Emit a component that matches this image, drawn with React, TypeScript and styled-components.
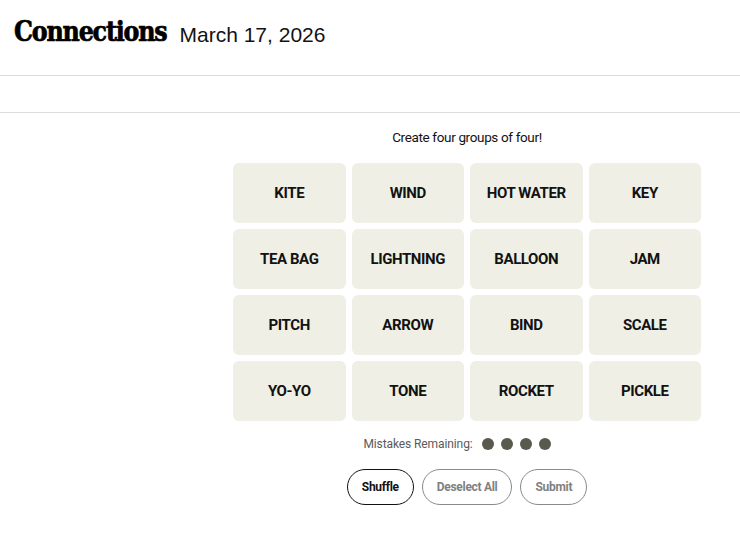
import styled, { createGlobalStyle } from 'styled-components';

const Global = createGlobalStyle`
  html, body {
    margin: 0;
    padding: 0;
    background: #ffffff;
    font-family: 'Roboto', 'Liberation Sans', sans-serif;
    color: #000;
  }
`;

const Header = styled.header`
  height: 76px;
  border-bottom: 1px solid #dcdcdc;
  display: flex;
  align-items: flex-start;
  padding: 15px 14px 0;
  gap: 6px;
  box-sizing: border-box;
`;

const Title = styled.h1`
  margin: 0 -20px 0 0;
  font-family: 'DejaVu Serif', 'Liberation Serif', serif;
  font-weight: 700;
  font-size: 28px;
  line-height: 34px;
  letter-spacing: -1.4px;
  -webkit-text-stroke: 0.7px #000;
  transform: scaleX(0.85);
  transform-origin: left center;
`;

const DateText = styled.span`
  font-family: 'Liberation Sans', sans-serif;
  font-size: 21px;
  line-height: 34px;
  font-weight: 400;
  color: #121212;
  margin-top: 3px;
`;

const Toolbar = styled.div`
  height: 36px;
  border-bottom: 1px solid #dcdcdc;
`;

const Board = styled.main`
  width: 468px;
  margin-left: 233px;
  display: flex;
  flex-direction: column;
  align-items: center;
`;

const Prompt = styled.p`
  margin: 16px 0 18px;
  font-size: 13.5px;
  color: #121212;
  letter-spacing: -0.35px;
`;

const Grid = styled.div`
  width: 100%;
  display: grid;
  grid-template-columns: repeat(4, 1fr);
  gap: 6px 6px;
`;

const Tile = styled.button`
  height: 60px;
  border: none;
  border-radius: 6px;
  background: #efefe6;
  font-family: 'Roboto', sans-serif;
  font-weight: 700;
  font-size: 15px;
  letter-spacing: -0.4px;
  color: #121212;
  text-transform: uppercase;
`;

const Mistakes = styled.div`
  display: flex;
  align-items: center;
  margin: 16px 0 0 -20px;
  font-size: 12px;
  color: #5a5a5a;
  letter-spacing: -0.1px;
`;

const Dots = styled.div`
  display: flex;
  gap: 7px;
  margin-left: 9px;
`;

const Dot = styled.span`
  width: 12px;
  height: 12px;
  border-radius: 50%;
  background: #5a594e;
`;

const Actions = styled.div`
  display: flex;
  gap: 8px;
  margin-top: 18px;
`;

const Pill = styled.button<{ $active?: boolean }>`
  height: 36px;
  padding: 0 14px;
  border-radius: 18px;
  background: #fff;
  border: 1px solid ${(p) => (p.$active ? '#121212' : '#8a8a8a')};
  color: ${(p) => (p.$active ? '#121212' : '#7f7f7f')};
  font-family: 'Roboto', sans-serif;
  font-weight: 700;
  font-size: 12px;
  letter-spacing: -0.3px;
`;

const words = [
  'KITE', 'WIND', 'HOT WATER', 'KEY',
  'TEA BAG', 'LIGHTNING', 'BALLOON', 'JAM',
  'PITCH', 'ARROW', 'BIND', 'SCALE',
  'YO-YO', 'TONE', 'ROCKET', 'PICKLE',
];

export default function App() {
  return (
    <>
      <Global />
      <Header>
        <Title>Connections</Title>
        <DateText>March 17, 2026</DateText>
      </Header>
      <Toolbar />
      <Board>
        <Prompt>Create four groups of four!</Prompt>
        <Grid>
          {words.map((w) => (
            <Tile key={w}>{w}</Tile>
          ))}
        </Grid>
        <Mistakes>
          Mistakes Remaining:
          <Dots>
            {[0, 1, 2, 3].map((i) => (
              <Dot key={i} />
            ))}
          </Dots>
        </Mistakes>
        <Actions>
          <Pill $active>Shuffle</Pill>
          <Pill>Deselect All</Pill>
          <Pill>Submit</Pill>
        </Actions>
      </Board>
    </>
  );
}
